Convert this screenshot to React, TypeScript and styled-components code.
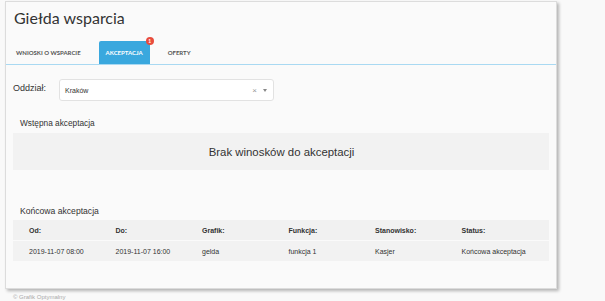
import styled, { createGlobalStyle } from 'styled-components'

const GlobalStyle = createGlobalStyle`
  html, body {
    margin: 0;
    padding: 0;
    background: #f9f9f9;
    font-family: 'Liberation Sans', Arial, sans-serif;
    color: #333;
  }
`

const Page = styled.div`
  width: 605px;
  height: 301px;
  overflow: hidden;
  padding: 1px 0 0 5px;
  box-sizing: border-box;
`

const Card = styled.div`
  width: 552px;
  height: 288px;
  background: #fafafa;
  border: 1px solid #dcdcdc;
  box-sizing: border-box;
  box-shadow: 2px 2px 3px rgba(0, 0, 0, 0.28);
`

const Title = styled.h1`
  margin: 0;
  padding: 7px 0 0 8px;
  height: 30px;
  box-sizing: border-box;
  font-family: Lato, sans-serif;
  font-weight: 400;
  font-size: 16px;
  color: #333;
  line-height: 18px;
`

const Tabs = styled.div`
  display: flex;
  align-items: flex-end;
  height: 32px;
  padding-left: 3px;
  border-bottom: 1px solid #a9d9f2;
`

const Tab = styled.div<{ $active?: boolean }>`
  position: relative;
  height: 23px;
  padding: 0 7px;
  margin-right: 11px;
  display: flex;
  align-items: center;
  font-family: Lato, sans-serif;
  font-weight: 700;
  font-size: 6px;
  color: ${p => (p.$active ? '#fff' : '#555')};
  background: ${p => (p.$active ? '#3aa8de' : 'transparent')};
  border-radius: 2px 2px 0 0;
`

const Badge = styled.span`
  position: absolute;
  top: -4px;
  right: -4px;
  width: 8px;
  height: 8px;
  border-radius: 50%;
  background: #e84c3d;
  color: #fff;
  font-size: 5px;
  line-height: 8px;
  text-align: center;
`

const Body = styled.div`
  padding: 14px 7px 0 7px;
`

const FieldRow = styled.div`
  display: flex;
  align-items: flex-start;
  gap: 12px;
`

const Label = styled.label`
  font-size: 9px;
  padding-top: 4px;
  width: 34px;
  color: #333;
`

const Select = styled.div`
  width: 215px;
  height: 22px;
  box-sizing: border-box;
  background: #fff;
  border: 1px solid #e2e2e2;
  border-radius: 3px;
  display: flex;
  align-items: center;
  padding: 0 6px 0 5px;
  font-size: 7px;
  color: #333;
`

const SelectValue = styled.span`
  flex: 1;
`

const Clear = styled.span`
  color: #999;
  font-size: 8px;
  margin-right: 6px;
`

const Caret = styled.span`
  width: 0;
  height: 0;
  border-left: 2.5px solid transparent;
  border-right: 2.5px solid transparent;
  border-top: 3px solid #888;
`

const SectionTitle = styled.div<{ $size: number; $gap: number }>`
  font-size: ${p => p.$size}px;
  color: #333;
  padding-left: 7px;
  margin-top: ${p => p.$gap}px;
`

const EmptyBox = styled.div`
  margin-top: 5px;
  background: #f2f2f2;
  height: 37px;
  display: flex;
  align-items: center;
  justify-content: center;
  font-size: 11.4px;
  color: #333;
  padding-left: 1px;
`

const Table = styled.div`
  margin-top: 4px;
`

const Row = styled.div<{ $head?: boolean }>`
  display: grid;
  grid-template-columns: repeat(6, 86.5px);
  height: 20px;
  align-items: center;
  padding-left: 16px;
  background: ${p => (p.$head ? '#f1f1f1' : '#f2f2f2')};
  margin-bottom: ${p => (p.$head ? '1px' : '0')};
  font-size: 7px;
  font-weight: ${p => (p.$head ? 700 : 400)};
  color: #333;
`

const Footer = styled.div`
  font-size: 6px;
  color: #aaa;
  padding: 5px 0 0 8px;
`

const headers = ['Od:', 'Do:', 'Grafik:', 'Funkcja:', 'Stanowisko:', 'Status:']
const rows = [
  ['2019-11-07 08:00', '2019-11-07 16:00', 'gelda', 'funkcja 1', 'Kasjer', 'Końcowa akceptacja'],
]

export default function App() {
  return (
    <>
      <GlobalStyle />
      <Page>
        <Card>
          <Title>Giełda wsparcia</Title>
          <Tabs>
            <Tab>WNIOSKI O WSPARCIE</Tab>
            <Tab $active>
              AKCEPTACJA
              <Badge>1</Badge>
            </Tab>
            <Tab>OFERTY</Tab>
          </Tabs>
          <Body>
            <FieldRow>
              <Label>Oddział:</Label>
              <Select>
                <SelectValue>Kraków</SelectValue>
                <Clear>×</Clear>
                <Caret />
              </Select>
            </FieldRow>
            <SectionTitle $size={8.3} $gap={17}>Wstępna akceptacja</SectionTitle>
            <EmptyBox>Brak winosków do akceptacji</EmptyBox>
            <SectionTitle $size={8.6} $gap={36}>Końcowa akceptacja</SectionTitle>
            <Table>
              <Row $head>
                {headers.map(h => (
                  <span key={h}>{h}</span>
                ))}
              </Row>
              {rows.map((r, i) => (
                <Row key={i}>
                  {r.map((c, j) => (
                    <span key={j}>{c}</span>
                  ))}
                </Row>
              ))}
            </Table>
          </Body>
        </Card>
        <Footer>© Grafik Optymalny</Footer>
      </Page>
    </>
  )
}
